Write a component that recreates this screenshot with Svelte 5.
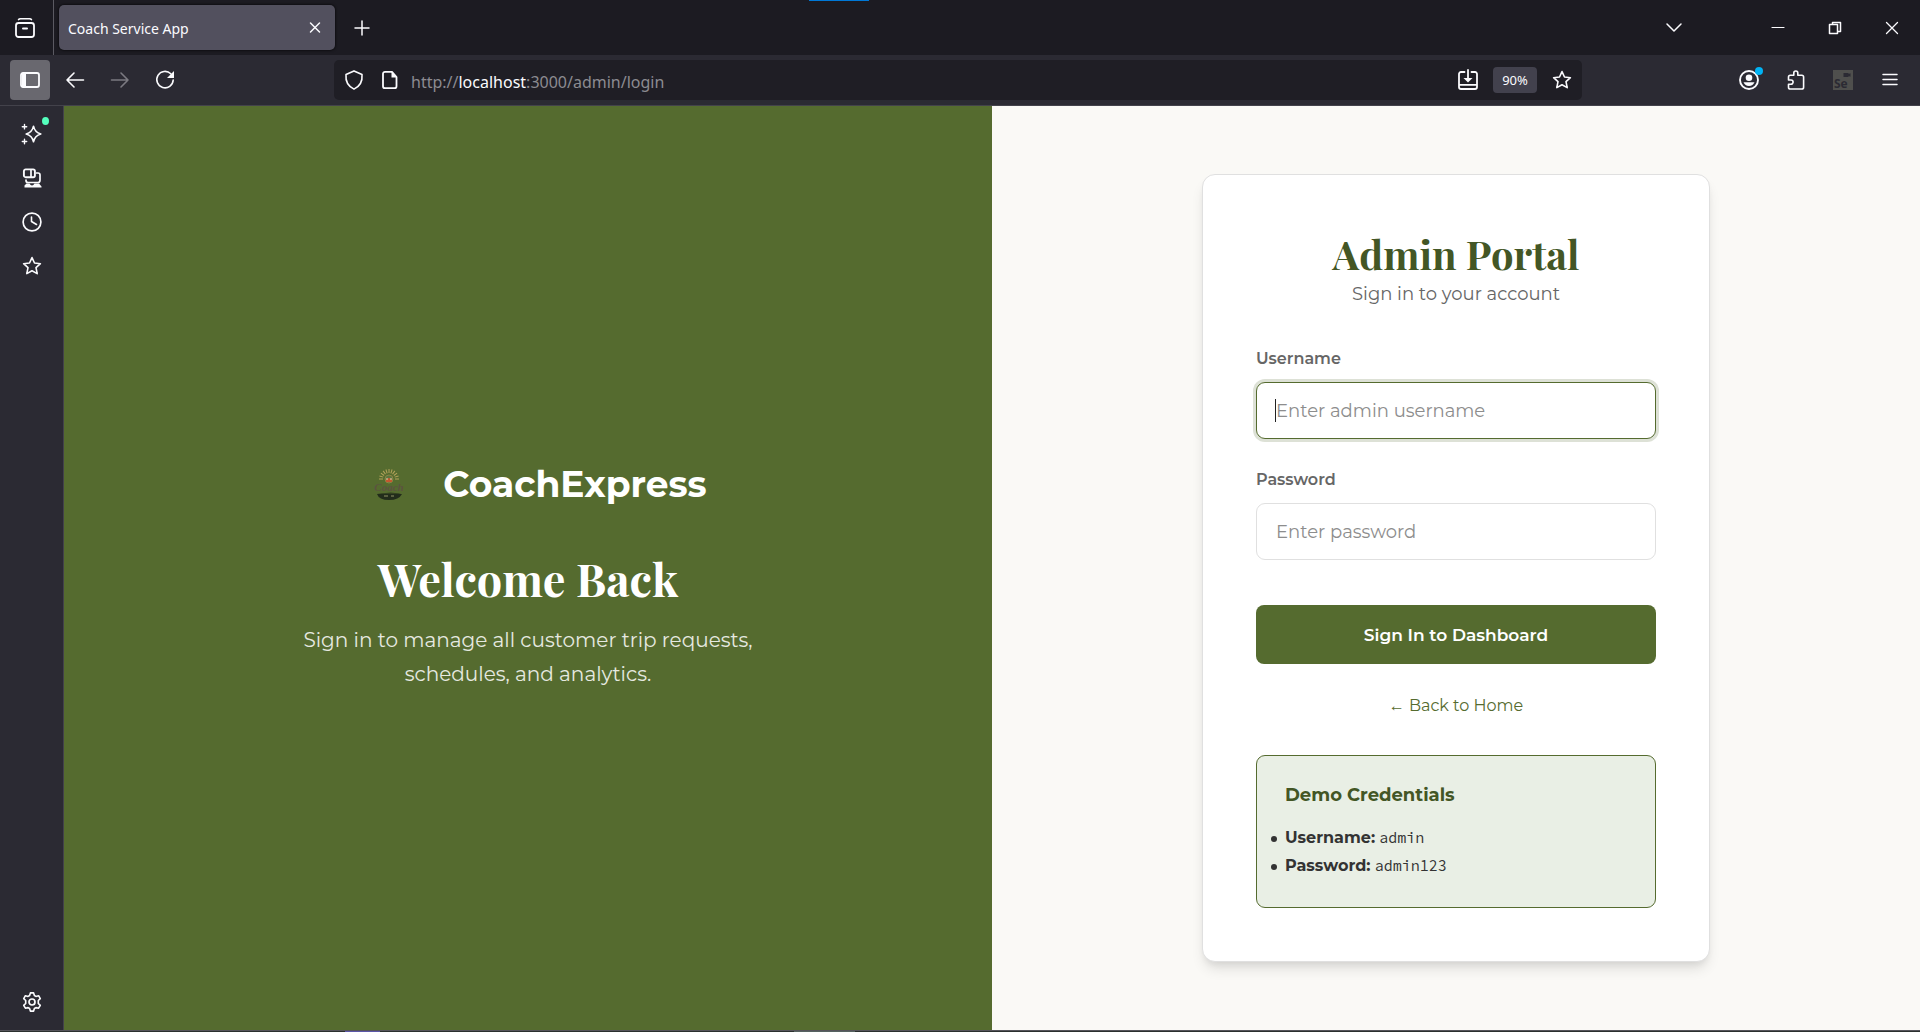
<script>
  let username = $state('');
  let password = $state('');
  const credentials = [
    { label: 'Username:', value: 'admin' },
    { label: 'Password:', value: 'admin123' }
  ];
  const rays = [-90, -72, -54, -36, -18, 0, 18, 36, 54, 72, 90];
  const star = 'M10 1.6 12.5 7l5.9.7-4.4 4 1.2 5.9L10 14.7l-5.2 2.9L6 11.7l-4.4-4L7.500 7Z';
</script>

<div class="window">
  <header class="tabs">
    <div class="capture"></div>
    <button class="view" aria-label="Firefox View">
      <svg class="ico" viewBox="0 0 20 20"><rect x="1" y="5" width="18" height="14" rx="2.500" stroke-width="1.800" /><path d="M3.500 1.600Q4 .8 5.500.8h9q1.500 0 2 .8" stroke-width="1.500" /><path d="M8 10.500h4" stroke-width="2" /></svg>
    </button>
    <div class="tab">
      <span>Coach Service App</span>
      <button aria-label="Close tab"><svg class="ico" viewBox="0 0 20 20"><path d="m5.500 5 9 9m0-9-9 9" stroke-width="1.500" /></svg></button>
    </div>
    <button class="plus" aria-label="New tab"><svg class="ico" viewBox="0 0 20 20"><path d="M10 3v14M3 10h14" /></svg></button>
    <div class="wincontrols">
      <button class="list" aria-label="List all tabs"><svg class="ico" viewBox="0 0 20 20"><path d="m3 6 7 7 7-7" /></svg></button>
      <button aria-label="Minimize"><svg class="ico" viewBox="0 0 20 20"><path d="M4 9.500h12" stroke-width="1.200" /></svg></button>
      <button aria-label="Restore"><svg class="ico" viewBox="0 0 20 20"><rect x="4.500" y="6.500" width="8" height="9" /><path d="M7.500 6V4.500h8v9H13" /></svg></button>
      <button aria-label="Close"><svg class="ico" viewBox="0 0 20 20"><path d="m4.500 4.500 11 11m0-11-11 11" stroke-width="1.300" /></svg></button>
    </div>
  </header>

  <nav class="toolbar" aria-label="Navigation">
    <button class="on" aria-label="Sidebar"><svg class="ico" viewBox="0 0 20 20"><rect x="1" y="3" width="18" height="14" rx="2" stroke-width="1.800" /><path d="M2 3h4v14H2Z" fill="currentColor" stroke="none" /></svg></button>
    <button aria-label="Back"><svg class="ico" viewBox="0 0 20 20"><path d="M18.500 10H2m7-7-7 7 7 7" stroke-width="1.600" /></svg></button>
    <button class="dim" aria-label="Forward"><svg class="ico" viewBox="0 0 20 20"><path d="M1.500 10H18m-7-7 7 7-7 7" stroke-width="1.600" /></svg></button>
    <button class="reload" aria-label="Reload"><svg class="ico" viewBox="0 0 20 20"><path d="M15.800 3.800A8.200 8.200 0 1 0 18.200 10" stroke-width="1.600" /><path d="M19 1v7h-7Z" fill="currentColor" stroke="none" /></svg></button>
    <div class="urlbar">
      <button class="small" aria-label="Tracking protection"><svg class="ico" viewBox="0 0 20 20"><path d="M10 .9 18 4.500c.6 6.500-2.500 12-8 14.600C4.500 16.500 1.400 11 2 4.500Z" stroke-width="1.600" /></svg></button>
      <button class="small" aria-label="Site information"><svg class="ico" viewBox="0 0 20 20"><path d="M12 1.800H5a2 2 0 0 0-2 2v12.400a2 2 0 0 0 2 2h9.500a2 2 0 0 0 2-2V7Z" stroke-width="1.800" /><path d="M11.500 1.500 17 7.500h-5.500Z" fill="currentColor" stroke="none" /></svg></button>
      <p class="url">http://<b>localhost</b>:3000/admin/login</p>
      <button aria-label="Install page"><svg class="ico" viewBox="0 0 20 20"><path d="M6.500 2H3a2 2 0 0 0-2 2v13a2 2 0 0 0 2 2h14a2 2 0 0 0 2-2V4a2 2 0 0 0-2-2h-3.500M10 0v10M1 14.800h18" stroke-width="1.800" /><path d="M5.500 8h9L10 12.500Z" fill="currentColor" stroke="none" /></svg></button>
      <button class="zoom"><span>90%</span></button>
      <button aria-label="Bookmark"><svg class="ico" viewBox="0 0 20 20"><path d={star} stroke-width="1.600" /></svg></button>
    </div>
    <div class="tools">
      <button aria-label="Account"><svg class="ico" viewBox="0 0 20 20"><circle cx="10" cy="10" r="9" stroke-width="1.900" /><circle cx="10" cy="7.800" r="3.300" fill="currentColor" stroke="none" /><path d="M4.500 12.300h11q-1.500 3.700-5.500 3.700t-5.500-3.700Z" fill="currentColor" stroke="none" /><circle cx="20" cy="1" r="4" fill="#00b3f4" stroke="none" /></svg></button>
      <button aria-label="Extensions"><svg class="ico" viewBox="0 0 20 20"><path d="M2.500 10V7q0-1.800 1.800-1.800h3.500V3a2 2 0 0 1 4 0v2.200h4Q17.600 5.200 17.600 7v10.200q0 1.800-1.800 1.800H4.300q-1.800 0-1.800-1.800v-3H5a2.100 2.100 0 0 0 0-4.200Z" stroke-width="1.600" /></svg></button>
      <button class="se" aria-label="Selenium IDE"><svg viewBox="0 0 20 20"><path fill="#4f4f4d" d="M0 0h20v20H0Z" /><path fill="#2b2a33" d="M10.500 3h5v1l2-.8v3.600l-2-.8v1h-5Z" /><text x="1" y="18">Se</text></svg></button>
      <button aria-label="Menu"><svg class="ico" viewBox="0 0 20 20"><path d="M3 4.500h14M3 9.500h14M3 14.500h14" /></svg></button>
    </div>
  </nav>

  <div class="body">
    <aside class="sidebar" aria-label="Browser sidebar">
      <button aria-label="AI chatbot"><svg class="ico" viewBox="0 0 20 20"><path d="M11.500 2.200q1.300 6.200 7.300 7.800-6 1.600-7.300 7.800Q10.200 11.600 4.200 10q6-1.600 7.300-7.800Z" stroke-width="1.600" /><path d="M2.500.5v4.400M.3 2.700h4.400M2.500 15.300v4.400M.3 17.500h4.400" stroke-width="1.400" /></svg><i></i></button>
      <button aria-label="Synced tabs"><svg class="ico" viewBox="0 0 20 20"><rect x="1.900" y="1.400" width="11" height="7.800" rx="1.800" stroke-width="1.900" /><path d="M9 2v7M14.500 5H16q2 0 2 2v5q0 2.500-2 2.500H6q-2 0-2-2V12" stroke-width="1.700" /><path d="M4.500 15.500h3q1 2 2.500 2t2.500-2H17l2.500 3v1h-17v-2Z" fill="currentColor" stroke="none" /></svg></button>
      <button aria-label="History"><svg class="ico" viewBox="0 0 20 20"><circle cx="10" cy="10" r="8.900" stroke-width="1.700" /><path d="M9.500 5v4.500l5 3" stroke-width="1.600" /></svg></button>
      <button aria-label="Bookmarks"><svg class="ico" viewBox="0 0 20 20"><path d={star} stroke-width="1.600" /></svg></button>
      <button class="last" aria-label="Customize sidebar"><svg class="ico" viewBox="0 0 20 20"><circle cx="10" cy="10" r="3" stroke-width="1.700" /><path d="M8.400.9h3.200l.8 2.600 1.500.9 2.700-.7 1.700 2.900-2 1.900v2.900l2 1.900-1.700 2.900-2.700-.6-1.500.9-.8 2.600H8.400l-.8-2.600-1.500-.9-2.700.6-1.700-2.900 2-1.900V8.500l-2-1.900 1.700-2.900 2.700.7 1.500-.9Z" stroke-width="1.600" /></svg></button>
    </aside>

    <main>
      <section class="welcome">
        <div class="brand">
          <svg viewBox="0 0 80 76" aria-hidden="true">
            <g stroke="#b3a35a" stroke-width="1">
              {#each rays as a}<path d="M40 27v-4" transform={`rotate(${a} 40 33)`} />{/each}
            </g>
            <circle cx="40" cy="33" r="4" fill="#5d7740" stroke="#8d8444" />
            <path d="M37 34q3-4 6 0v2h-6Z" fill="#c4582f" />
            <path d="M37 33h2m2 0h2" stroke="#ded2af" />
            <path d="M28 48h25q-3 6-13 6t-12-6Z" fill="#222c1b" />
            <path d="M28 48q5-1 9-1 5-1 9 0 4 0 6 1Z" fill="#32401f" />
            <path d="M35 50h4m3 0h3" stroke="#8f9264" />
            <text x="40" y="45" text-anchor="middle">Coach</text>
          </svg>
          <span>CoachExpress</span>
        </div>
        <h2>Welcome Back</h2>
        <p>Sign in to manage all customer trip requests, schedules, and analytics.</p>
      </section>

      <section class="login">
        <div class="card">
          <h1>Admin Portal</h1>
          <p class="sub">Sign in to your account</p>
          <form onsubmit={(e) => e.preventDefault()}>
            <label for="username">Username</label>
            <div class="field">
              <input id="username" class="active" type="text" placeholder="Enter admin username" bind:value={username} />
              <span class="caret"></span>
            </div>
            <label for="password">Password</label>
            <div class="field"><input id="password" type="password" placeholder="Enter password" bind:value={password} /></div>
            <button class="submit">Sign In to Dashboard</button>
          </form>
          <a class="home" href="/"><span class="arrow">←</span> Back to Home</a>
          <div class="demo">
            <h3>Demo Credentials</h3>
            <ul>
              {#each credentials as c}
                <li><strong>{c.label}</strong> <code>{c.value}</code></li>
              {/each}
            </ul>
          </div>
        </div>
      </section>
    </main>
  </div>
  <footer class="edge"><i class="glow"></i><i class="task"></i></footer>
</div>

<style>
  :global(body) { margin: 0; }
  .window { min-height: 100vh; display: flex; flex-direction: column; background: #2b2a33; color: #fbfbfe; font-family: "Noto Sans", "Open Sans", sans-serif; }
  .window :global(*) { box-sizing: border-box; }
  button { font: inherit; color: inherit; background: none; border: 0; padding: 0; display: grid; place-items: center; flex: none; }
  h1, h2, h3, p, ul { margin: 0; }
  .ico { width: 20px; height: 20px; fill: none; stroke: currentColor; stroke-width: 1.500; stroke-linejoin: round; stroke-linecap: round; overflow: visible; display: block; }

  .tabs { position: relative; height: 55px; display: flex; align-items: center; background: #1c1b22; }
  .capture { position: absolute; top: 0; left: 809px; width: 60px; height: 1px; background: #0078d7; }
  .view { width: 54px; height: 55px; padding-right: 3px; border-right: 1px solid #5b5a62; }
  .tab { margin-left: 5px; width: 276px; height: 45px; padding: 0 6px 0 9px; display: flex; align-items: center; justify-content: space-between; border-radius: 5px; background: #52505e; box-shadow: 0 0 3px #000; font-size: 14px; }
  .tab span { padding-top: 2px; }
  .tab button { width: 28px; height: 28px; }
  .plus { width: 40px; height: 40px; margin-left: 7px; }
  .wincontrols { margin-left: auto; display: flex; align-items: center; }
  .wincontrols button { width: 57px; height: 55px; }
  .wincontrols .list { width: 40px; margin-right: 55px; }

  .toolbar { min-height: 51px; display: flex; align-items: center; padding: 0 10px; gap: 5px; border-bottom: 1px solid #43424b; }
  .toolbar button { width: 40px; height: 40px; border-radius: 4px; }
  .toolbar .on { background: #69686f; }
  .toolbar .dim { color: #7b7a81; }
  .urlbar { margin-left: 144px; flex: 1; min-width: 0; height: 40px; display: flex; align-items: center; border-radius: 5px; background: #1f1e25; }
  .urlbar .small { width: 36px; }
  .urlbar .small:first-child { margin-left: 2px; }
  .url { flex: 1; margin-left: 3px; padding-top: 4px; font-size: 16px; line-height: 24px; color: #8c8b91; }
  .url b { font-weight: 400; color: #fbfbfe; }
  .toolbar .zoom { width: 44px; height: auto; padding: 4px 0; margin: 0 5px; background: #42414d; font-size: 13px; line-height: 18px; }
  .tools { margin-left: 142px; display: flex; gap: 7px; }
  .se svg { width: 20px; height: 20px; display: block; }
  .se text { font: bold 12px "Open Sans", sans-serif; fill: #2b2a33; }

  .body { flex: 1; display: flex; }
  .sidebar { flex: none; width: 64px; padding: 6px 0; display: flex; flex-direction: column; border-right: 1px solid #43424b; }
  .sidebar button { position: relative; height: 44px; }
  .sidebar i { position: absolute; top: 5px; left: 42px; width: 7px; height: 8px; border-radius: 50%; background: #54ffbd; }
  .sidebar .last { margin-top: auto; }

  main { flex: 1; display: grid; grid-template-columns: 1fr 1fr; font-family: Montserrat, Inter, sans-serif; }
  .welcome { background: #556b2f; display: flex; flex-direction: column; align-items: center; justify-content: center; text-align: center; color: #fff; }
  .brand { min-height: 76px; display: flex; align-items: center; gap: 14px; font-size: 36px; font-weight: 700; line-height: 44px; }
  .brand svg { width: 80px; height: 76px; fill: none; }
  .brand text { font: italic bold 11px "Liberation Serif", serif; fill: #5c5340; }
  h1, h2 { font-family: "Playfair Display", "Liberation Serif", serif; font-weight: 700; }
  h2 { margin-top: 26px; font-size: 45px; line-height: 60px; }
  .welcome p { max-width: 480px; margin-top: 15px; font-size: 20px; line-height: 34px; color: #e6e9e0; }

  .login { background: #faf9f6; display: flex; align-items: center; justify-content: center; padding: 32px; }
  .card { width: 100%; max-width: 508px; padding: 53px; border: 1px solid #e0e0e0; border-radius: 13px; background: #fff; text-align: center; box-shadow: 0 9px 14px -3px rgba(0, 0, 0, 0.12), 0 4px 6px -2px rgba(0, 0, 0, 0.06); }
  h1 { font-size: 40px; line-height: 52px; color: #435625; }
  .sub { margin-top: 2px; font-size: 18px; line-height: 24px; color: #666; }
  form { margin-top: 41px; text-align: left; }
  label { display: block; font-size: 16px; line-height: 24px; font-weight: 600; color: #666; }
  .field { position: relative; margin: 11px 0 29px; }
  input { display: block; width: 100%; height: 57px; padding: 0 19px; border: 1px solid #e0e0e0; border-radius: 9px; background: #fff; font: 400 18px Montserrat, Inter, sans-serif; color: #333; outline: none; }
  input::placeholder { color: #8d8d8d; opacity: 1; }
  .active, input:focus { border-color: #556b2f; box-shadow: 0 0 0 3px #dde1d6; }
  .caret { position: absolute; left: 19px; top: 17px; width: 1px; height: 23px; background: #222; }
  .submit { width: 100%; height: 59px; margin-top: 45px; border-radius: 8px; background: #556b2f; color: #fff; font-size: 17px; font-weight: 600; }
  .home { display: block; margin-top: 30px; font-size: 16px; line-height: 24px; color: #556b2f; text-decoration: none; }
  .arrow { font-family: "Liberation Serif", serif; }
  .demo { margin-top: 37px; padding: 25px 28px 27px; border: 1px solid #556b2f; border-radius: 9px; background: #e9efe5; text-align: left; }
  h3 { font-size: 18px; line-height: 28px; font-weight: 700; color: #435625; }
  ul { margin-top: 15px; padding: 0; list-style: none; font-size: 16px; line-height: 28px; color: #333; }
  li { position: relative; }
  li::before { content: ""; position: absolute; left: -14px; top: 12px; width: 6px; height: 6px; border-radius: 50%; background: #333; }
  code { font: 15px "Source Code Pro", "Liberation Mono", monospace; }

  .edge { height: 2px; display: flex; background: #2b302f; border-top: 1px solid #55545a; }
  .glow { margin-left: 345px; width: 35px; background: #5b56a8; }
  .task { margin-left: 414px; width: 61px; background: #566260; }
</style>
